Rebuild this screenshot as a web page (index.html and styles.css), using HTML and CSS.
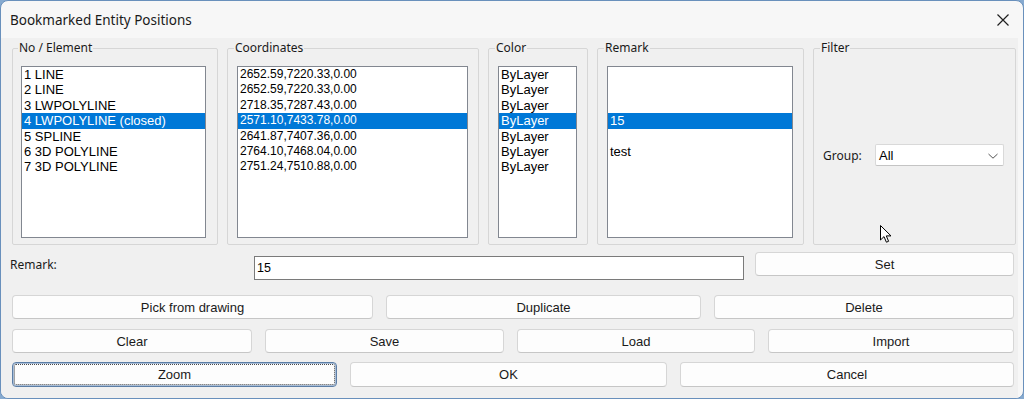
FILE: index.html
```html
<!DOCTYPE html>
<html lang="en">

<head>
    <meta charset="UTF-8">
    <title>Bookmarked Entity Positions</title>
    <link rel="stylesheet" href="styles.css">
</head>

<body>
    <div class="window">
        <div class="titlebar">
            <span class="title">Bookmarked Entity Positions</span>
            <svg class="close" width="14" height="14" viewBox="0 0 14 14">
                <path d="M1.5 1.5 L12.5 12.5 M12.5 1.5 L1.5 12.5" stroke="#1f1f1f" stroke-width="1.2" fill="none" />
            </svg>
        </div>

        <div class="client">
            <div class="groups">
                <fieldset class="group g_elem">
                    <legend>No / Element</legend>
                    <ul class="list">
                        <li>1 LINE</li>
                        <li>2 LINE</li>
                        <li>3 LWPOLYLINE</li>
                        <li class="sel">4 LWPOLYLINE (closed)</li>
                        <li>5 SPLINE</li>
                        <li>6 3D POLYLINE</li>
                        <li>7 3D POLYLINE</li>
                    </ul>
                </fieldset>
                <fieldset class="group g_coord">
                    <legend>Coordinates</legend>
                    <ul class="list coords">
                        <li>2652.59,7220.33,0.00</li>
                        <li>2652.59,7220.33,0.00</li>
                        <li>2718.35,7287.43,0.00</li>
                        <li class="sel">2571.10,7433.78,0.00</li>
                        <li>2641.87,7407.36,0.00</li>
                        <li>2764.10,7468.04,0.00</li>
                        <li>2751.24,7510.88,0.00</li>
                    </ul>
                </fieldset>
                <fieldset class="group g_color">
                    <legend>Color</legend>
                    <ul class="list">
                        <li>ByLayer</li>
                        <li>ByLayer</li>
                        <li>ByLayer</li>
                        <li class="sel">ByLayer</li>
                        <li>ByLayer</li>
                        <li>ByLayer</li>
                        <li>ByLayer</li>
                    </ul>
                </fieldset>
                <fieldset class="group g_remark">
                    <legend>Remark</legend>
                    <ul class="list">
                        <li></li>
                        <li></li>
                        <li></li>
                        <li class="sel">15</li>
                        <li></li>
                        <li>test</li>
                        <li></li>
                    </ul>
                </fieldset>
                <fieldset class="group g_filter">
                    <legend>Filter</legend>
                    <div class="filter_row">
                        <span class="lbl">Group:</span>
                        <div class="combo">
                            <span>All</span>
                            <svg width="12" height="8" viewBox="0 0 12 8">
                                <path d="M1.5 2 L6 6.2 L10.5 2" stroke="#555" stroke-width="1" fill="none" />
                            </svg>
                        </div>
                    </div>
                </fieldset>
            </div>

            <div class="remark_row">
                <span class="lbl">Remark:</span>
                <div class="edit">15</div>
                <button class="btn btn_set">Set</button>
            </div>

            <div class="btn_row row_a">
                <button class="btn">Pick from drawing</button>
                <button class="btn">Duplicate</button>
                <button class="btn">Delete</button>
            </div>
            <div class="btn_row row_b">
                <button class="btn">Clear</button>
                <button class="btn">Save</button>
                <button class="btn">Load</button>
                <button class="btn">Import</button>
            </div>
            <div class="btn_row row_c">
                <button class="btn focus">Zoom</button>
                <button class="btn">OK</button>
                <button class="btn">Cancel</button>
            </div>
        </div>

        <!-- mouse pointer left in the screenshot -->
        <svg class="cursor" width="13" height="19" viewBox="0 0 13 19">
            <path d="M0.5 0.5 L0.5 15 L4 11.6 L6.4 17.2 L8.6 16.3 L6.3 10.9 L11 10.9 Z" fill="#fff" stroke="#000" stroke-width="1" stroke-linejoin="round" />
        </svg>
    </div>
</body>

</html>
```
FILE: styles.css
```css
* {
    margin: 0;
    padding: 0;
    box-sizing: border-box;
}

body {
    width: 1024px;
    height: 399px;
    background: #86aad0;
    overflow: hidden;
    font-family: "Liberation Sans", Arial, sans-serif;
}

.window {
    position: relative;
    width: 1024px;
    height: 399px;
    border: 1px solid #6990bc;
    border-radius: 8px;
    background: #f7f7f7;
    overflow: hidden;
    display: flex;
    flex-direction: column;
}

.titlebar {
    height: 37px;
    display: flex;
    align-items: center;
    justify-content: space-between;
    padding: 0 13px 0 9px;
    flex-shrink: 0;
}

.title {
    font-family: "Noto Sans", "Open Sans", sans-serif;
    font-size: 13.5px;
    color: #1a1a1a;
}

.client {
    flex: 1;
    margin-right: 5px;
    background: #f0f0f0;
    padding: 3px 2px 0 11px;
    border-bottom-left-radius: 7px;
}

.groups {
    display: flex;
    gap: 9px;
}

.group {
    border: 1px solid #d6d6d6;
    border-radius: 2px;
    padding: 0 10px 6px 9px;
    min-width: 0;
}

.group legend {
    font-family: "Noto Sans", "Open Sans", sans-serif;
    font-size: 12px;
    line-height: 14px;
    color: #1a1a1a;
    padding: 0 1px;
    margin-left: -3px;
}

.g_elem {
    width: 206px;
    padding-left: 8px;
    padding-right: 11px;
}

.g_coord {
    width: 252px;
}

.g_color {
    width: 100px;
}

.g_remark {
    width: 207px;
}

.g_filter {
    flex: 1;
}

.list {
    list-style: none;
    margin-top: 11px;
    height: 172px;
    width: 100%;
    background: #fff;
    border: 1px solid #828790;
    font-size: 13px;
    color: #000;
    overflow: hidden;
}

.list.coords {
    font-size: 12px;
}

.list li {
    height: 15.4px;
    line-height: 15.4px;
    padding-left: 2px;
    white-space: nowrap;
}

.list li.sel {
    background: #0078d7;
    color: #fff;
}

.lbl {
    font-family: "Noto Sans", "Open Sans", sans-serif;
    font-size: 12px;
    color: #1a1a1a;
}

.filter_row {
    display: flex;
    align-items: center;
    margin-top: 89px;
}

.filter_row .lbl {
    width: 52px;
}

.combo {
    width: 129px;
    height: 22px;
    background: #fff;
    border: 1px solid #d9d9d9;
    border-bottom-color: #c4c4c4;
    border-radius: 2px;
    display: flex;
    align-items: center;
    justify-content: space-between;
    padding: 1px 4px 0 3px;
    font-size: 13px;
    color: #000;
}

.remark_row {
    display: flex;
    align-items: flex-start;
    margin-top: 7px;
    margin-right: 2px;
}

.remark_row .lbl {
    width: 242px;
    margin-left: -2px;
    margin-right: 2px;
    margin-top: 4px;
}

.edit {
    width: 490px;
    height: 24px;
    margin-top: 4px;
    background: #fff;
    border: 1px solid #7a7a7a;
    font-size: 12.5px;
    line-height: 22px;
    padding-left: 2px;
    color: #000;
}

.btn_set {
    flex: 1;
    height: 26px;
    margin-left: 11px;
}

.btn {
    font-family: "Liberation Sans", Arial, sans-serif;
    font-size: 13px;
    color: #1a1a1a;
    background: #fdfdfd;
    border: 1px solid #d6d6d6;
    border-bottom-color: #c6c6c6;
    border-radius: 4px;
    height: 24px;
}

.btn_row {
    display: grid;
    margin-right: 2px;
}

.row_a {
    grid-template-columns: 361px 315px 1fr;
    column-gap: 13px;
    margin-top: 15px;
}

.row_b {
    grid-template-columns: 240px 239px 238px 1fr;
    column-gap: 13px;
    margin-top: 10px;
}

.row_c {
    grid-template-columns: 325px 317px 1fr;
    column-gap: 13px;
    margin-top: 9px;
}

.row_c .btn {
    height: 25px;
}

.btn.focus {
    border: 1px solid #5c7ea6;
    outline: 1px dotted #4a4a4a;
    outline-offset: -3px;
    box-shadow: inset 0 0 0 1px #a9bdd6;
}

.cursor {
    position: absolute;
    left: 879px;
    top: 224px;
}
```
